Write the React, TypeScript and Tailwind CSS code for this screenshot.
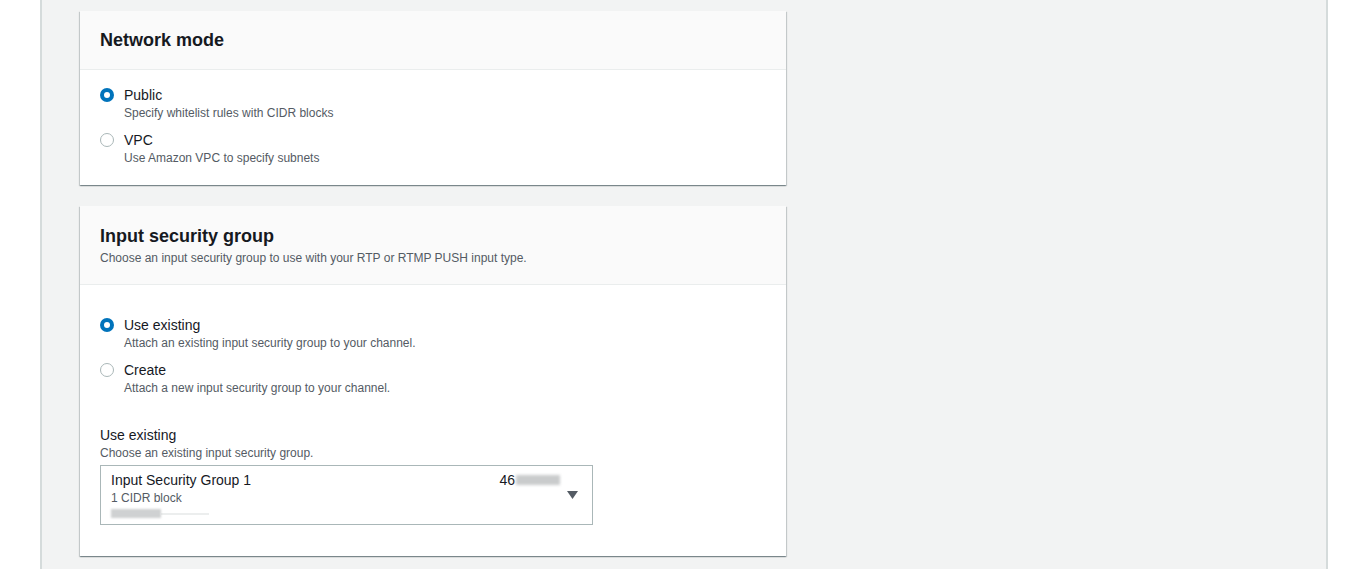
import React from 'react'

const Radio = ({ checked }: { checked?: boolean }) =>
  checked ? (
    <span className='mt-[3px] box-border flex h-[14px] w-[14px] shrink-0 items-center justify-center rounded-full bg-[#0073bb]'>
      <span className='h-[6px] w-[6px] rounded-full bg-white' />
    </span>
  ) : (
    <span className='mt-[3px] box-border h-[14px] w-[14px] shrink-0 rounded-full border border-[#aab7b8] bg-white' />
  )

const RadioItem = ({ label, desc, checked }: { label: string; desc: string; checked?: boolean }) => (
  <div className='flex gap-[10px]'>
    <Radio checked={checked} />
    <div className='flex flex-col'>
      <span className='text-[14px] leading-[20px] text-[#16191f]'>{label}</span>
      <span className='text-[12px] leading-[16px] text-[#545b64]'>{desc}</span>
    </div>
  </div>
)

const Card = ({ children }: { children: React.ReactNode }) => (
  <div className='w-[706px] bg-white shadow-[0_1px_1px_0_rgba(0,28,36,0.3),1px_1px_1px_0_rgba(0,28,36,0.15),-1px_1px_1px_0_rgba(0,28,36,0.15)]'>
    {children}
  </div>
)

export default function App() {
  return (
    <div className="flex h-[569px] w-full overflow-hidden bg-white" style={{ fontFamily: '"Liberation Sans", Arial, sans-serif' }}>
      <div className='w-[40px] shrink-0' />
      <div className='flex w-[1288px] shrink-0 flex-col gap-[21px] border-x-2 border-[#d5dbdb] bg-[#f2f3f3] pl-[38px] pt-[11px]'>
        <Card>
          <div className='border-b border-[#eaeded] bg-[#fafafa] px-[20px] py-[18px]'>
            <h2 className='text-[18px] font-bold leading-[22px] text-[#16191f]'>Network mode</h2>
          </div>
          <div className='flex flex-col gap-[9px] px-[20px] pb-[19px] pt-[15px]'>
            <RadioItem checked label='Public' desc='Specify whitelist rules with CIDR blocks' />
            <RadioItem label='VPC' desc='Use Amazon VPC to specify subnets' />
          </div>
        </Card>

        <Card>
          <div className='border-b border-[#eaeded] bg-[#fafafa] px-[20px] pb-[18px] pt-[19px]'>
            <h2 className='text-[18px] font-bold leading-[22px] text-[#16191f]'>Input security group</h2>
            <p className='mt-[3px] text-[12px] leading-[16px] text-[#545b64]'>
              Choose an input security group to use with your RTP or RTMP PUSH input type.
            </p>
          </div>
          <div className='px-[20px] pb-[31px] pt-[30px]'>
            <div className='flex flex-col gap-[9px]'>
              <RadioItem checked label='Use existing' desc='Attach an existing input security group to your channel.' />
              <RadioItem label='Create' desc='Attach a new input security group to your channel.' />
            </div>

            <div className='mt-[29px]'>
              <label className='block text-[14px] leading-[20px] text-[#16191f]'>Use existing</label>
              <span className='block text-[12px] leading-[16px] text-[#545b64]'>Choose an existing input security group.</span>
              <div className='relative mt-[4px] box-border h-[60px] w-[493px] border border-[#aab7b8] bg-white px-[10px] pt-[4px]'>
                <div className='flex justify-between pr-[22px]'>
                  <span className='text-[14px] leading-[20px] text-[#16191f]'>Input Security Group 1</span>
                  <span className='flex items-center text-[14px] leading-[20px] text-[#16191f]'>
                    46
                    <span className='ml-[1px] h-[10px] w-[44px] bg-[#c9cbcc] blur-[1.5px]' />
                  </span>
                </div>
                <div className='text-[12px] leading-[16px] text-[#545b64]'>1 CIDR block</div>
                <div className='mt-[3px] flex items-center'>
                  <span className='h-[9px] w-[50px] bg-[#cfd1d2] blur-[1px]' />
                  <span className='h-[2px] w-[48px] bg-[#eceeee]' />
                </div>
                <svg className='absolute right-[14px] top-[25px]' width='11' height='8' viewBox='0 0 11 8'>
                  <path d='M0 0h11L5.5 8z' fill='#545b64' />
                </svg>
              </div>
            </div>
          </div>
        </Card>
      </div>
      <div className='flex-1 bg-white' />
    </div>
  )
}
